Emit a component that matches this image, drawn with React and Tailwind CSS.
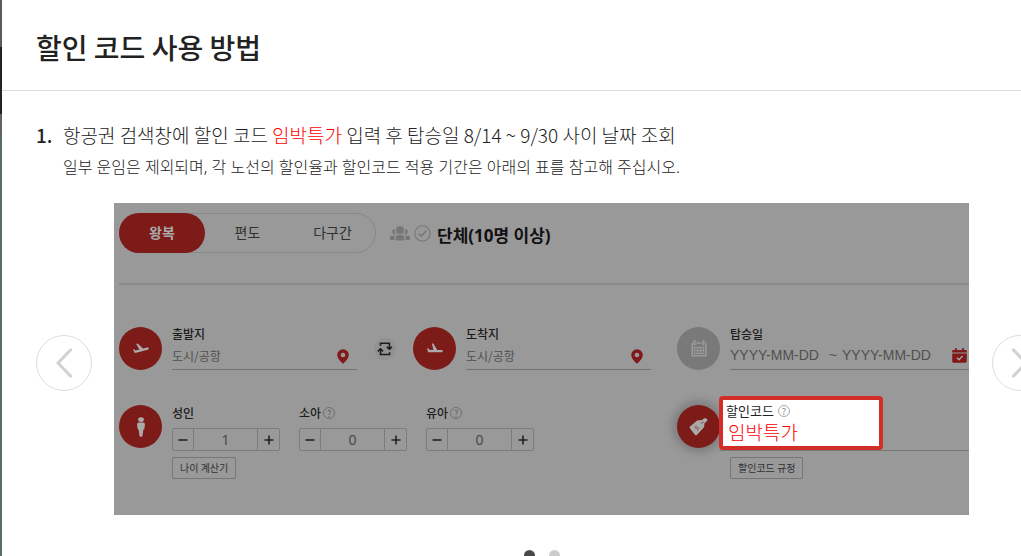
import React, { useState } from "react";

const TakeoffIcon = () => (
  <svg viewBox="2 3 20.5 14" className="h-[11px] w-4" fill="#aaa" aria-hidden="true">
    <path d="M22.07 9.64c-.21-.8-1.04-1.28-1.84-1.06L14.92 10l-6.9-6.43-1.93.51 4.14 7.17-4.97 1.33-1.97-1.54-1.45.39 1.82 3.16.77 1.33 1.6-.43 5.31-1.42 4.35-1.16L21 11.49c.81-.23 1.28-1.05 1.07-1.85z" />
  </svg>
);

const LandingIcon = () => (
  <svg viewBox="2 2 20 14" className="h-[11px] w-4" fill="#aaa" aria-hidden="true">
    <path
      transform="rotate(-14 12 11)"
      d="M19.34 15.85c.8.21 1.62-.26 1.84-1.06.21-.8-.26-1.62-1.06-1.84l-5.31-1.42-2.76-9.02L10.12 2v8.28L5.15 8.95l-.93-2.32-1.45-.39v5.17l16.57 4.44z"
    />
  </svg>
);

const CalendarIcon = () => (
  <svg viewBox="0 0 16 17" className="h-[17px] w-4" fill="none" stroke="#999" aria-hidden="true">
    <path d="M3.5 0.8v4M12.5 0.8v4" strokeWidth="2" strokeLinecap="round" />
    <path d="M5.5 3h5M2 3.5h-.8v12.3h13.6V3.5H14" strokeWidth="1.6" />
    <path d="M3.5 7.5h9v6h-9zM3.5 10.5h9M6.5 7.5v6M9.5 7.5v6" strokeWidth="1.1" />
  </svg>
);

const PersonIcon = () => (
  <svg viewBox="0 0 8 20" className="h-5 w-2" fill="#aaa" aria-hidden="true">
    <ellipse cx="4" cy="2.6" rx="2.9" ry="2.3" />
    <path d="M1.6 5.4h4.8C7.6 5.4 8 6.4 7.9 7.8L7.5 11c-.1 1-.6 1.6-1.2 1.9L5.5 19c-.2 1-2.8 1-3 0l-.8-6.1C1 12.6.6 12 .5 11L.1 7.8C0 6.4.4 5.4 1.6 5.4z" />
  </svg>
);

const TagIcon = () => (
  <svg viewBox="0 0 20 18" className="h-[18px] w-5" aria-hidden="true">
    <path
      d="M1 8.6 8.2 2.5 13.3 2c.8-1.3 2.4-2 3.8-1.5 1.8.4 1.6 2.4.3 3.2l-1.8 1.4-.6 4.2-7.1 7.6c-.6.6-1.3.6-1.8 0L.9 10.2c-.4-.5-.4-1.2.1-1.6z"
      fill="#aaa"
    />
    <path d="m11.8 5.6 1.6-1.3 1.3.1M5.6 9.7l4.600.5" stroke="#7d1b19" strokeWidth=".7" fill="none" />
    <circle cx="7" cy="8" r=".6" fill="#7d1b19" />
    <circle cx="8.600" cy="12" r=".6" fill="#7d1b19" />
  </svg>
);

const PinIcon = () => (
  <svg viewBox="0 0 12 15" className="h-[15px] w-3" aria-hidden="true">
    <path d="M6 .2A5.800 5.800 0 0 0 .2 6C.2 9.200 3 12 6 14.800 9 12 11.800 9.200 11.800 6A5.800 5.800 0 0 0 6 .2z" fill="#801919" />
    <circle cx="6" cy="6" r="2.300" fill="#999" />
  </svg>
);

const CalendarCheckIcon = () => (
  <svg viewBox="0 0 15 15" className="h-[15px] w-[15px]" aria-hidden="true">
    <path d="M1.5 2H3V.3h2V2h5V.3h2V2h1.5c.8 0 1.3.5 1.3 1.2V4.500H.2V3.200C.2 2.500.7 2 1.500 2zM.2 5.600h14.600v7.700c0 .9-.5 1.400-1.400 1.400H1.600c-.9 0-1.400-.5-1.400-1.400z" fill="#801919" />
    <path d="m5 9.800 2 2 3.600-3.900" fill="none" stroke="#aaa" strokeWidth="1.4" />
  </svg>
);

const GroupIcon = () => (
  <svg viewBox="0 0 20 15" className="h-[15px] w-5" fill="#777" aria-hidden="true">
    <circle cx="10" cy="4.2" r="4" />
    <path d="M5.800 14.500v-3.200c0-1.500.8-2.300 2-2.300h4.400c1.200 0 2 .8 2 2.300v3.200z" />
    <path d="M5 3.200a2.700 2.700 0 1 0 .9 5.200C5.200 7.200 4.700 5 5 3.200zM15 3.200a2.700 2.700 0 1 1-.9 5.200c.7-1.200 1.200-3.400.9-5.200zM0 14v-2.500C0 10.300.6 9.800 1.600 9.800h3L4.500 14zM20 14v-2.500c0-1.200-.6-1.700-1.600-1.700h-3l.1 4.200z" />
  </svg>
);

const CheckCircleIcon = () => (
  <svg viewBox="0 0 17 17" className="size-[17px]" fill="none" stroke="#777" aria-hidden="true">
    <circle cx="8.5" cy="8.5" r="7.7" strokeWidth="1.1" />
    <path d="m4.500 8.500 2.800 2.600 5-5.400" strokeWidth="1.5" />
  </svg>
);

const SwapIcon = () => (
  <svg viewBox="0 0 16 14" className="h-3.5 w-4" fill="none" stroke="#1c1c1c" strokeWidth="1.6" aria-hidden="true">
    <path d="M3.500 3.800V1.200h8.900v5.600M12.600 10.200v2.300H3.500v-5" />
    <path d="m9.900 4.800 2.500 2.300L15 4.800M.9 9.300l2.600-2.400L6 9.300" />
  </svg>
);

function Chevron({ flip }) {
  return (
    <svg viewBox="0 0 18 30" className={flip ? "h-[30px] w-[18px] -scale-x-100" : "h-[30px] w-[18px]"} aria-hidden="true">
      <path d="M15.500 2 3 15l12.500 13" fill="none" stroke="#d2d2d2" strokeWidth="3.2" strokeLinecap="round" strokeLinejoin="round" />
    </svg>
  );
}

function Badge({ className = "bg-[#7d1b19]", children }) {
  return <span className={`flex size-[43px] shrink-0 items-center justify-center rounded-full ${className}`}>{children}</span>;
}

function Help({ className = "border-[#6f6f6f] text-[#606060]" }) {
  return (
    <button type="button" aria-label="도움말" className={`flex size-3 items-center justify-center rounded-full border text-[9px] leading-none ${className}`}>
      ?
    </button>
  );
}

function AirportField({ id, label, icon }) {
  return (
    <div className="flex gap-2.5">
      <Badge>{icon}</Badge>
      <div className="w-[185px] border-b border-[#737373]">
        <label htmlFor={id} className="block text-xs leading-[14px] font-medium text-[#1c1c1c]">{label}</label>
        <div className="flex h-7 items-center pt-0.5 pr-2">
          <input id={id} placeholder="도시/공항" className="min-w-0 flex-1 bg-transparent text-xs text-[#333] outline-none placeholder:text-[#505050]" />
          <button type="button" aria-label={`${label} 선택`}><PinIcon /></button>
        </div>
      </div>
    </div>
  );
}

function Stepper({ id, label, initial, help }) {
  const [value, setValue] = useState(initial);
  return (
    <div className="w-[108px]">
      <div className="flex h-4 items-center gap-0.5">
        <label htmlFor={id} className="text-xs leading-4 font-medium text-[#1c1c1c]">{label}</label>
        {help && <Help />}
      </div>
      <div className="mt-[7px] flex h-[23px] rounded-xs border border-[#7c7c7c]">
        <button type="button" aria-label={`${label} 감소`} onClick={() => setValue(Math.max(0, value - 1))} className="flex w-5 items-center justify-center">
          <svg viewBox="0 0 10 10" className="size-2.5" aria-hidden="true"><path d="M.5 5h9" stroke="#222" strokeWidth="1.6" /></svg>
        </button>
        <input id={id} value={value} readOnly className="min-w-0 flex-1 border-x border-[#7c7c7c] bg-transparent text-center font-['Noto_Sans'] text-sm leading-5 text-[#484848] outline-none" />
        <button type="button" aria-label={`${label} 증가`} onClick={() => setValue(value + 1)} className="flex w-[21px] items-center justify-center">
          <svg viewBox="0 0 10 10" className="size-2.5" aria-hidden="true"><path d="M.5 5h9M5 .5v9" stroke="#222" strokeWidth="1.6" /></svg>
        </button>
      </div>
    </div>
  );
}

function SmallButton({ children }) {
  return (
    <button type="button" className="mt-1.5 flex h-[22px] items-center rounded-xs border border-[#777] px-[7px] pb-0.5 text-[10px] text-[#303030]">{children}</button>
  );
}

function BookingPanel() {
  return (
    <div className="h-[312px] min-w-0 flex-1 overflow-hidden bg-[#999] pt-2.5 pl-[5px]">
      <div className="flex h-10 items-center">
        <div className="flex h-10 w-[257px] rounded-full border border-[#888] text-sm text-[#303030]">
          <button type="button" className="-my-px -ml-px w-[86px] rounded-full bg-[#7d1b19] pb-0.5 font-bold text-[#aaa]">왕복</button>
          <button type="button" className="w-[85px] pb-0.5">편도</button>
          <button type="button" className="flex-1 pb-0.5">다구간</button>
        </div>
        <div className="ml-3.5 flex items-center gap-1">
          <GroupIcon />
          <CheckCircleIcon />
          <span className="ml-0.5 pt-1.5 font-['Noto_Sans','Noto_Sans_CJK_KR',sans-serif] text-[17px] leading-6 font-bold text-[#111]">단체(10명 이상)</span>
        </div>
      </div>

      <hr className="mt-[30px] border-t-2 border-[#8b8b8b]" />

      <div className="mt-[42px] grid grid-cols-[294px_264px_1fr]">
        <div className="flex">
          <AirportField id="from" label="출발지" icon={<TakeoffIcon />} />
          <button type="button" aria-label="출발지와 도착지 바꾸기" className="ml-[17px] flex size-[22px] items-center justify-center self-center rounded-full bg-[#929292]">
            <SwapIcon />
          </button>
        </div>
        <AirportField id="to" label="도착지" icon={<LandingIcon />} />
        <div className="flex gap-2.5">
          <Badge className="bg-[#797979]"><CalendarIcon /></Badge>
          <div className="min-w-0 flex-1 border-b border-[#737373]">
            <label htmlFor="depart" className="block text-xs leading-[14px] font-medium text-[#1c1c1c]">탑승일</label>
            <div className="flex h-7 items-center font-['Liberation_Sans'] text-sm text-[#505050]">
              <input id="depart" placeholder="YYYY-MM-DD" className="w-[99px] bg-transparent outline-none placeholder:text-[#505050]" />
              <span className="w-[13px]">~</span>
              <input aria-label="귀국일" placeholder="YYYY-MM-DD" className="w-[110px] bg-transparent outline-none placeholder:text-[#505050]" />
              <button type="button" aria-label="날짜 선택"><CalendarCheckIcon /></button>
            </div>
          </div>
        </div>
      </div>

      <div className="mt-[35px] grid grid-cols-[558px_1fr]">
        <div className="flex gap-2.5">
          <Badge><PersonIcon /></Badge>
          <div>
            <div className="flex gap-[19px]">
              <Stepper id="adult" label="성인" initial={1} />
              <Stepper id="child" label="소아" initial={0} help />
              <Stepper id="infant" label="유아" initial={0} help />
            </div>
            <SmallButton>나이 계산기</SmallButton>
          </div>
        </div>
        <div className="flex">
          <Badge className="bg-[#7d1b19] shadow-[0_0_10px_4px_rgba(0,0,0,0.2)]"><TagIcon /></Badge>
          <div className="relative -mt-[9px] -ml-px flex-1">
            <div className="border-b border-[#777]">
              <div className="h-[54px] w-[164px] rounded-sm border-4 border-[#d32d27] bg-white px-[3px] pt-[3px]">
                <div className="flex h-4 items-center gap-1">
                  <label htmlFor="code" className="text-[13px] leading-4 text-[#222]">할인코드</label>
                  <Help className="border-[#aaa] text-[#888]" />
                </div>
                <input id="code" defaultValue="임박특가" className="block h-[26px] w-full pl-0.5 text-[19px] font-light text-[#f00] outline-none" />
              </div>
            </div>
            <div className="pl-[11px]"><SmallButton>할인코드 규정</SmallButton></div>
          </div>
        </div>
      </div>
    </div>
  );
}

export default function App() {
  return (
    <div className="flex h-screen overflow-hidden bg-white font-['Noto_Sans_CJK_KR','Noto_Sans',sans-serif] text-[#222]">
      <div className="flex w-0.5 shrink-0 flex-col" aria-hidden="true">
        <div className="h-[47px] bg-[#5b5b5b]" />
        <div className="h-[67px] bg-[#222]" />
        <div className="h-[23px] bg-[#626262]" />
        <div className="flex-1 bg-[#576e67]" />
      </div>
      <main className="min-w-0 flex-1">
        <header className="border-b border-[#ddd] px-[34px] pt-[27px] pb-[23px]">
          <h1 className="text-[28px] leading-10 font-medium">할인 코드 사용 방법</h1>
        </header>
        <section className="pt-[30px]">
          <div className="flex px-[34px] text-[19px] leading-7">
            <span className="w-[27px] shrink-0 font-medium">1.</span>
            <div>
              <p className="font-light">
                항공권 검색창에 할인 코드 <span className="text-[#f00]">임박특가</span> 입력 후 탑승일 8/14 ~ 9/30 사이 날짜 조회
              </p>
              <p className="mt-1 font-['Noto_Sans','Noto_Sans_CJK_KR',sans-serif] text-base leading-7 font-light">
                일부 운임은 제외되며, 각 노선의 할인율과 할인코드 적용 기간은 아래의 표를 참고해 주십시오.
              </p>
            </div>
          </div>
          <div className="mt-[22px] -mr-[27px] flex items-center pl-[34px]">
            <button type="button" aria-label="이전" className="mt-2 mr-[22px] flex size-14 shrink-0 items-center justify-center rounded-full border border-[#ddd]"><Chevron /></button>
            <BookingPanel />
            <button type="button" aria-label="다음" className="mt-2 ml-[23px] flex size-14 shrink-0 items-center justify-center rounded-full border border-[#ddd]"><Chevron flip /></button>
          </div>
          <div className="mt-[35px] flex justify-center gap-3.5 pl-[61px]">
            <button type="button" aria-label="슬라이드 1" className="size-[11px] rounded-full bg-[#4a4a4a]" />
            <button type="button" aria-label="슬라이드 2" className="size-[11px] rounded-full bg-[#ccc]" />
          </div>
        </section>
      </main>
    </div>
  );
}
